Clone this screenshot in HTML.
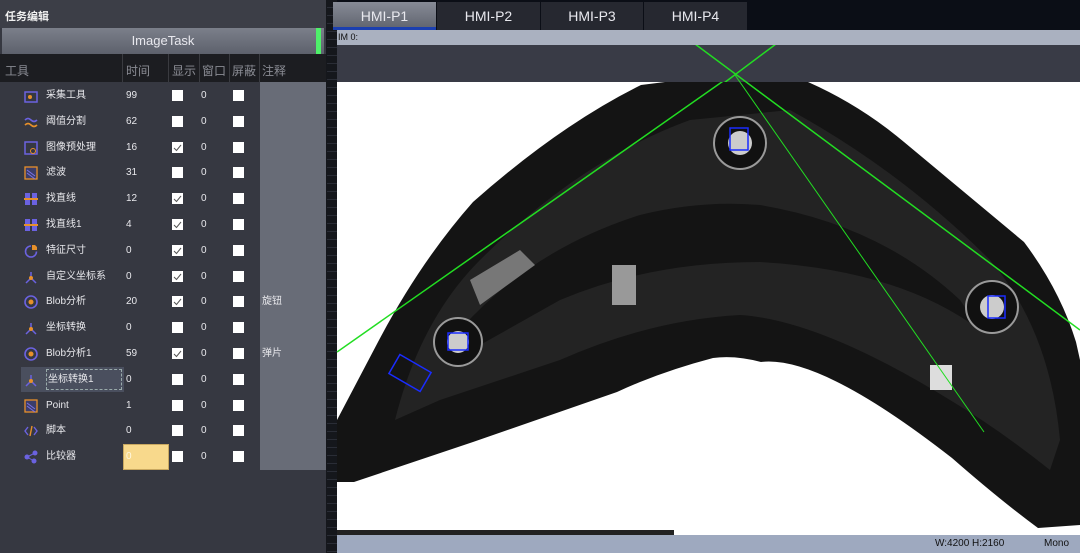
<!DOCTYPE html>
<html><head><meta charset="utf-8"><style>
*{margin:0;padding:0;box-sizing:border-box}
body{width:1080px;height:553px;overflow:hidden;background:#15171c;font-family:"Liberation Sans","Noto Sans CJK SC",sans-serif;position:relative}
.a{position:absolute}
#lp{left:0;top:0;width:326px;height:553px;background:#363841}
.row{position:absolute;left:0;width:326px;height:26px;font-size:10px;color:#e8e8ec;line-height:26px}
.row span{position:absolute;top:0}
.ic{position:absolute;left:24px;top:6px;width:14px;height:14px}
.cb{position:absolute;top:7px;width:11px;height:11px;background:#fff;line-height:0}
.hd{position:absolute;top:62px;font-size:12px;color:#8a8c94}
.tab{position:absolute;top:2px;height:28px;background:#262830;color:#e8e8ee;font-size:14px;text-align:center;line-height:28px}
</style></head><body>
<div id="lp" class="a">
 <div class="a" style="left:0;top:0;width:326px;height:28px;background:#3c3e47"></div>
 <div class="a" style="left:5px;top:8px;font-size:11px;font-weight:bold;color:#f0f0f0">任务编辑</div>
 <div class="a" style="left:2px;top:28px;width:322px;height:26px;background:linear-gradient(#7b7f8a,#5d616c);color:#e8e8ee;font-size:13px;text-align:center;line-height:26px">ImageTask</div>
 <div class="a" style="left:316px;top:28px;width:5px;height:26px;background:#4ef06a"></div>
 <div class="a" style="left:0;top:54px;width:326px;height:28px;background:#1c1d21"></div>
 <div class="a" style="left:122px;top:54px;width:1px;height:28px;background:#3a3b40"></div>
 <div class="a" style="left:168px;top:54px;width:1px;height:28px;background:#3a3b40"></div>
 <div class="a" style="left:199px;top:54px;width:1px;height:28px;background:#3a3b40"></div>
 <div class="a" style="left:229px;top:54px;width:1px;height:28px;background:#3a3b40"></div>
 <div class="a" style="left:259px;top:54px;width:1px;height:28px;background:#3a3b40"></div>
 <div class="hd" style="left:5px">工具</div><div class="hd" style="left:126px">时间</div><div class="hd" style="left:172px">显示</div><div class="hd" style="left:202px">窗口</div><div class="hd" style="left:232px">屏蔽</div><div class="hd" style="left:262px">注释</div>
 <div class="a" style="left:260px;top:82px;width:66px;height:388px;background:#686c77"></div>
 <div class="a" style="left:21px;top:367px;width:103px;height:25px;background:#4a4f5e"></div>
 <div class="a" style="left:46px;top:369px;width:76px;height:21px;border:1px dashed #9aa"></div>
 <div class="a" style="left:123px;top:444px;width:46px;height:26px;background:#f8d98c;border:1px solid #c9a860"></div>
</div>
<div id="rows"></div>
<script>
var r=[["采集工具","99",0,"",0],["阈值分割","62",0,"",1],["图像预处理","16",1,"",2],["滤波","31",0,"",3],["找直线","12",1,"",4],["找直线1","4",1,"",4],["特征尺寸","0",1,"",9],["自定义坐标系","0",1,"",5],["Blob分析","20",1,"旋钮",6],["坐标转换","0",0,"",5],["Blob分析1","59",1,"弹片",6],["坐标转换1","0",0,"",5],["Point","1",0,"",3],["脚本","0",0,"",7],["比较器","0",0,"",8]];
var ic=['<rect x="1" y="3" width="12" height="10" fill="none" stroke="#6b62e0" stroke-width="1.5"/><circle cx="6" cy="8" r="2" fill="#e8902a"/>',
'<path d="M1 5q3-3 6 0t6 0" stroke="#6b62e0" stroke-width="1.6" fill="none"/><path d="M1 10q3-3 6 0t6 0" stroke="#e8902a" stroke-width="1.6" fill="none"/>',
'<rect x="1" y="1" width="12" height="12" fill="none" stroke="#6b62e0" stroke-width="1.5"/><circle cx="9" cy="10" r="2.5" fill="none" stroke="#e8902a"/>',
'<rect x="1" y="1" width="12" height="12" fill="#3b3d6a" stroke="#e8902a" stroke-width="1.3"/><path d="M3 4l8 6M3 7l8 6" stroke="#7a72e8"/>',
'<rect x="1" y="1" width="5" height="12" fill="#6b62e0"/><rect x="8" y="1" width="5" height="12" fill="#6b62e0"/><rect x="0" y="6" width="14" height="2" fill="#e8902a"/>',
'<path d="M7 2v6M7 8l-5 5M7 8l5 5" stroke="#6b62e0" stroke-width="1.5" fill="none"/><circle cx="7" cy="8" r="2" fill="#e8902a"/>',
'<circle cx="7" cy="7" r="6" fill="none" stroke="#6b62e0" stroke-width="1.6"/><circle cx="7" cy="7" r="2.5" fill="#e8902a"/>',
'<path d="M4 3L1 7l3 4M10 3l3 4-3 4" stroke="#6b62e0" stroke-width="1.4" fill="none"/><path d="M8 2L6 12" stroke="#e8902a" stroke-width="1.4"/>',
'<circle cx="3" cy="7" r="2.5" fill="#6b62e0"/><circle cx="11" cy="3" r="2.5" fill="#6b62e0"/><circle cx="10" cy="11" r="2.5" fill="#6b62e0"/><path d="M3 7L11 3M3 7l7 4" stroke="#6b62e0"/>',
'<path d="M7 2A5.5 5.5 0 1 0 12.5 7.5" fill="none" stroke="#6b62e0" stroke-width="1.6"/><path d="M8 1h3l2 2v3H8z" fill="#e8902a"/>'];
var h='';
r.forEach(function(e,i){var t=83+i*25.8;
h+='<div class="row" style="top:'+t+'px"><svg class="ic" viewBox="0 0 14 14">'+ic[e[4]]+'</svg><span style="left:'+(i==11?48:46)+'px">'+e[0]+'</span><span style="left:126px;'+(i==14?'color:#fff8e0':'')+'">'+e[1]+'</span><div class="cb" style="left:172px">'+(e[2]?'<svg width="11" height="11"><path d="M2 6l2.5 2.5L9 3" stroke="#555" fill="none"/></svg>':'')+'</div><span style="left:201px">0</span><div class="cb" style="left:233px"></div><span style="left:262px">'+e[3]+'</span></div>';});
document.getElementById('rows').innerHTML=h;
</script>
<div class="a" style="left:327px;top:0;width:10px;height:553px;background:repeating-linear-gradient(#15171c 0 7px,#2a2d36 7px 8px)"></div>
<div class="a" style="left:337px;top:0;width:743px;height:30px;background:#0b0e16"></div>
<div class="tab" style="left:333px;width:103px;background:linear-gradient(#878b96,#5e626d)">HMI-P1</div>
<div class="a" style="left:333px;top:27px;width:103px;height:3px;background:#1b3fb0"></div>
<div class="tab" style="left:437px;width:103px">HMI-P2</div>
<div class="tab" style="left:541px;width:102px">HMI-P3</div>
<div class="tab" style="left:644px;width:103px">HMI-P4</div>
<div class="a" style="left:337px;top:30px;width:743px;height:15px;background:#aab1c0;font-size:9px;color:#111;line-height:15px;padding-left:1px">IM 0:</div>
<div class="a" style="left:337px;top:45px;width:743px;height:37px;background:#393b46"></div>
<svg class="a" style="left:337px;top:82px" width="743" height="453" viewBox="337 82 743 453">
<rect x="337" y="82" width="743" height="453" fill="#fff"/>
<path d="M337 482L337 420L378 342Q420 262 473 202Q560 125 641 85L665 82H808Q860 105 904 142L1024 242Q1060 290 1076 342L1080 360V525L1038 528Q1000 500 952 458Q820 355 761 362Q735 355 713 358Q660 372 617 392L473 442L354 482Z" fill="#141414"/>
<path d="M395 420Q420 320 480 260Q580 160 690 120L790 110Q900 170 990 260Q1050 330 1060 440L1050 470Q1000 430 950 400Q820 320 740 315Q650 320 560 360L440 400Z" fill="#232323"/>
<path d="M460 330Q530 250 640 215Q700 200 760 205Q880 225 960 300L980 330Q900 270 760 262Q650 262 560 300L480 345Z" fill="#141414"/>
<path d="M470 280L520 250L535 265L480 305Z" fill="#777"/>
<rect x="337" y="530" width="337" height="5" fill="#222"/>
<circle cx="458" cy="342" r="24" fill="#111" stroke="#9a9a9a" stroke-width="2"/><circle cx="458" cy="342" r="11" fill="#ccc"/>
<circle cx="740" cy="143" r="26" fill="#111" stroke="#9a9a9a" stroke-width="2"/><circle cx="740" cy="143" r="12" fill="#ccc"/>
<circle cx="992" cy="307" r="26" fill="#111" stroke="#9a9a9a" stroke-width="2"/><circle cx="992" cy="307" r="12" fill="#ccc"/>
<rect x="612" y="265" width="24" height="40" fill="#999"/><rect x="930" y="365" width="22" height="25" fill="#ddd"/>
<rect x="448" y="333" width="20" height="17" fill="none" stroke="#1a2cff" stroke-width="1.5"/>
<rect x="730" y="128" width="18" height="22" fill="none" stroke="#1a2cff" stroke-width="1.5"/>
<rect x="988" y="296" width="17" height="22" fill="none" stroke="#1a2cff" stroke-width="1.5"/>
<rect x="392" y="362" width="36" height="22" fill="none" stroke="#1a2cff" stroke-width="1.5" transform="rotate(30 410 373)"/>
<line x1="337" y1="352" x2="776" y2="44" stroke="#22dd22" stroke-width="1.5"/>
<line x1="695" y1="44" x2="1080" y2="330" stroke="#22dd22" stroke-width="1.5"/>
<line x1="735" y1="75" x2="984" y2="432" stroke="#22dd22" stroke-width="1"/>
</svg>
<svg class="a" style="left:337px;top:45px" width="743" height="37"><line x1="0" y1="328" x2="439" y2="-1" stroke="#22dd22" stroke-width="1.5"/><line x1="358" y1="-1" x2="743" y2="285" stroke="#22dd22" stroke-width="1.5"/><line x1="398" y1="30" x2="647" y2="387" stroke="#22dd22"/></svg>
<div class="a" style="left:337px;top:535px;width:743px;height:18px;background:#9ea9bf;font-size:10px;color:#111;line-height:18px">
<span class="a" style="left:598px">W:4200 H:2160</span><span class="a" style="left:707px">Mono</span></div>
</body></html>
